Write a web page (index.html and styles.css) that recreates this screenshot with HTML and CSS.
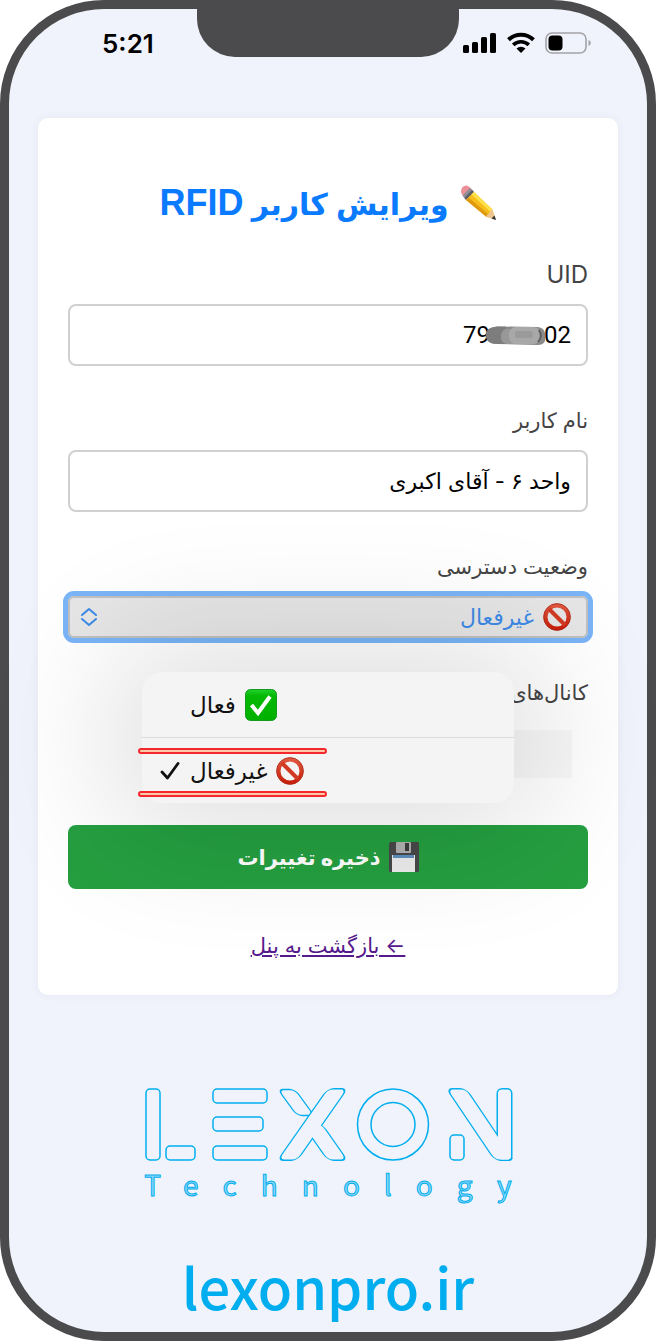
FILE: index.html
```html
<!DOCTYPE html>
<html lang="fa" dir="rtl">
<head>
    <meta charset="UTF-8">
    <meta name="viewport" content="width=device-width, initial-scale=1.0">
    <title>ویرایش کاربر RFID</title>
    <link rel="stylesheet" href="styles.css">
</head>
<body>
    <!-- shared icons -->
    <svg class="defs" width="0" height="0" aria-hidden="true">
        <defs>
            <linearGradient id="red" x1="0" y1="0" x2="0" y2="1">
                <stop offset="0" stop-color="#e0573f"/>
                <stop offset="1" stop-color="#c81f0b"/>
            </linearGradient>
            <linearGradient id="green" x1="0" y1="0" x2="0" y2="1">
                <stop offset="0" stop-color="#22d32f"/>
                <stop offset="0.2" stop-color="#06b906"/>
                <stop offset="1" stop-color="#00b000"/>
            </linearGradient>
            <symbol id="banned" viewBox="0 0 28 28">
                <circle cx="14" cy="14" r="11.5" fill="none" stroke="url(#red)" stroke-width="4"/>
                <path d="M6 6l16 16" stroke="#d23a22" stroke-width="4"/>
                <circle cx="14" cy="14" r="13.4" fill="none" stroke="#a82a18" stroke-width="0.8"/>
            </symbol>
        </defs>
    </svg>

    <div class="phone">
        <div class="notch"></div>
        <header class="status" dir="ltr">
            <span class="time">5:21</span>
            <div class="status-icons">
                <svg width="34" height="22" viewBox="0 0 34 22">
                    <rect x="0" y="13" width="6" height="8" rx="1.5"/>
                    <rect x="9" y="10" width="6" height="11" rx="1.5"/>
                    <rect x="18" y="5" width="6" height="16" rx="1.5"/>
                    <rect x="27" y="1" width="6" height="20" rx="1.5"/>
                </svg>
                <svg width="28" height="22" viewBox="0 0 28 22">
                    <path d="M1.5 7.800a18 18 0 0 1 25 0" fill="none" stroke="#000" stroke-width="4"/>
                    <path d="M6.200 12.900a11.300 11.300 0 0 1 15.600 0" fill="none" stroke="#000" stroke-width="3.600"/>
                    <path d="M14 21l-4.500-4.500a6.500 6.500 0 0 1 9 0z"/>
                </svg>
                <svg width="47" height="22" viewBox="0 0 47 22">
                    <rect x="1" y="1" width="40" height="20" rx="6" fill="none" stroke="#a3a3a8" stroke-width="1.600"/>
                    <rect x="3.500" y="3.500" width="14" height="15" rx="4"/>
                    <path d="M43.500 8c3 1 3 5 0 6z" fill="#a3a3a8"/>
                </svg>
            </div>
        </header>

        <main class="card">
            <h1 class="title">
                <svg width="36" height="36" viewBox="0 0 36 36">
                    <path d="M1 3q1-2.500 4-2.500 2 0 3.500 1.500l3.500 3.500-8 8-3-4q-2-3 0-6.500z" fill="#ec8f96"/>
                    <path d="M9 3l4 4-8 8-3.500-4.500z" fill="#8d8d94"/>
                    <path d="M11 5l2 2-8 8-1.500-2z" fill="#5d5d66"/>
                    <path d="M13 7l18.500 17.500-6 7.500L5 15z" fill="#f7bd18"/>
                    <path d="M13 7l18.500 17.500-2 2.500L10.500 9.500z" fill="#ffdf4a"/>
                    <path d="M7.500 12.500L5 15l20.500 17 2-2.600z" fill="#e09a10"/>
                    <path d="M31.500 24.500L35 35l-9.500-3q0-3 2.500-3 .5-3.500 3.500-4.500z" fill="#edc58c"/>
                    <path d="M33.500 30.500L35 35l-4.500-1.500z" fill="#333"/>
                </svg>
                <span>ویرایش کاربر <span class="latin">RFID</span></span>
            </h1>

            <form class="form">
                <div class="field">
                    <label for="uid" class="uid-label">UID</label>
                    <div class="control">
                        <input type="text" id="uid" class="uid" dir="ltr" value="79&#8199;&#8199;&#8199;&#8199;02">
                        <svg class="mask" width="60" height="20" viewBox="0 0 68 20" preserveAspectRatio="none">
                            <path d="M4 3q5-3 12-2.500l44 .5q7 1 8 6v8q-2 4-8 4l-46-1Q4 18 2 13-1 7 4 3z" fill="#8a8a8a"/>
                            <path d="M4 3q5-3 12-2.500h8q-5 9 2 17.500H14Q4 18 2 13-1 7 4 3z" fill="#777" fill-opacity="0.700"/>
                            <rect x="18" y="3" width="30" height="15" rx="7" fill="#989898"/>
                            <rect x="27" y="1" width="36" height="17" rx="8" fill="#a8a8a8"/>
                            <rect x="34" y="5" width="20" height="7" rx="2" fill="#9a9a9a"/>
                            <path d="M61 4q5 6-1 12" fill="none" stroke="#5c5c5c" stroke-width="2"/>
                        </svg>
                    </div>
                </div>

                <div class="field">
                    <label for="name">نام کاربر</label>
                    <input type="text" id="name" value="واحد ۶ - آقای اکبری">
                </div>

                <div class="field">
                    <label for="access">وضعیت دسترسی</label>
                    <div class="control">
                        <select id="access">
                            <option>فعال</option>
                            <option selected>غیرفعال</option>
                        </select>
                        <svg class="select-icon" width="28" height="28"><use href="#banned"/></svg>
                        <svg class="arrows" width="18" height="20" viewBox="0 0 18 20">
                            <path d="M2 8L9 2l7 6M2 12L9 18l7-6"/>
                        </svg>

                        <div class="menu" dir="ltr">
                            <button type="button" class="item">
                                <span class="tick"></span>
                                <span>فعال</span>
                                <svg width="32" height="32" viewBox="0 0 32 32">
                                    <rect x="0.500" y="0.500" width="31" height="31" rx="5" fill="url(#green)" stroke="#149a1c"/>
                                    <path d="M6.500 16l6.500 8L25 7.500" fill="none" stroke="#fff" stroke-width="4"/>
                                </svg>
                            </button>
                            <button type="button" class="item">
                                <span class="tick">
                                    <svg width="20" height="20" viewBox="0 0 20 20">
                                        <path d="M2 11l5.500 6L18 2.500" fill="none" stroke="#111" stroke-width="2.800" stroke-linecap="round" stroke-linejoin="round"/>
                                    </svg>
                                </span>
                                <span>غیرفعال</span>
                                <svg width="28" height="28"><use href="#banned"/></svg>
                            </button>
                            <span class="mark mark-top"></span>
                            <span class="mark mark-bottom"></span>
                        </div>
                    </div>
                </div>

                <div class="channels">
                    <span class="channels-label">کانال‌های</span>
                    <div class="channels-box"></div>
                </div>

                <button type="submit" class="save">
                    <svg width="30" height="30" viewBox="0 0 30 30">
                        <path d="M1 0h28l1 1v28l-1 1H1l-1-1V2z" fill="#48484a"/>
                        <rect x="7" y="0" width="15" height="11" rx="1" fill="#b0b0b2"/>
                        <rect x="16" y="1" width="4" height="8" fill="#3c3c3e"/>
                        <rect x="3" y="13" width="23" height="17" fill="#ececec"/>
                        <rect x="4" y="13" width="21" height="3" fill="#5f8fbd"/>
                    </svg>
                    <span>ذخیره تغییرات</span>
                </button>
            </form>

            <a class="back" href="#">← بازگشت به پنل</a>
        </main>

        <footer class="brand" dir="ltr">
            <svg class="logo" width="372" height="76" viewBox="0 0 372 76" role="img" aria-label="Lexon">
                <defs>
                    <g id="shapes">
                        <rect x="4" y="2" width="14" height="71" rx="4"/>
                        <rect x="24" y="59" width="29" height="14" rx="4"/>
                        <rect x="71" y="2" width="54" height="14" rx="4"/>
                        <rect x="71" y="30" width="50" height="14" rx="4"/>
                        <rect x="71" y="59" width="54" height="14" rx="4"/>
                        <rect x="308" y="48" width="14" height="25" rx="4"/>
                    </g>
                    <g id="cross">
                        <rect x="-9" y="-35" width="18" height="70" rx="5" transform="translate(170.500 37.500) skewX(-35)"/>
                        <rect x="-9" y="0" width="18" height="35" rx="5" transform="translate(170.500 37.500) skewX(35)"/>
                    </g>
                    <g id="slant">
                        <rect x="-9" y="-35" width="18" height="70" rx="5" transform="translate(338.500 37.500) skewX(34)"/>
                        <rect x="356" y="2.500" width="13" height="70" rx="4"/>
                    </g>
                </defs>
                <use href="#shapes" class="line"/>
                <rect class="line" x="-9" y="-35" width="17" height="26" rx="5" transform="translate(170.500 37.500) skewX(36)"/>
                <use href="#cross" class="outline"/>
                <use href="#slant" class="outline"/>
                <use href="#cross" class="inside"/>
                <use href="#slant" class="inside"/>
                <circle class="line" cx="251" cy="37.500" r="35.500"/>
                <circle class="line" cx="251" cy="37.500" r="22"/>
            </svg>
            <div class="tagline">Technology</div>
            <a class="site" href="#">lexonpro.ir</a>
        </footer>
    </div>
</body>
</html>
```
FILE: styles.css
```css
* {
    box-sizing: border-box;
}
body {
    margin: 0;
    background: #fff;
    font-family: Inter, "DejaVu Sans", sans-serif;
    color: #111;
}
.defs {
    position: absolute;
}
.phone {
    position: relative;
    display: flex;
    flex-direction: column;
    min-height: 100vh;
    border: 9px solid #4b4b4d;
    border-radius: 104px;
    background: #f0f3fb;
    padding: 0 29px;
}
.notch {
    position: absolute;
    top: -1px;
    left: 50%;
    width: 262px;
    height: 49px;
    transform: translateX(-50%);
    background: #4b4b4d;
    border-radius: 0 0 38px 38px;
}
.status {
    display: flex;
    justify-content: space-between;
    align-items: center;
    height: 32px;
    margin: 18px 26px 59px 64px;
}
.time {
    font-size: 26px;
    font-weight: 600;
    color: #000;
}
.status-icons {
    display: flex;
    gap: 10px;
}
.card {
    display: flex;
    flex-direction: column;
    padding: 63px 30px 34px;
    background: #fff;
    border-radius: 10px;
    box-shadow: 0 0 10px rgba(0, 0, 0, 0.05);
}
.title {
    display: flex;
    justify-content: center;
    align-items: center;
    gap: 12px;
    height: 44px;
    margin: 0 0 35px;
    font-family: "Liberation Sans", "DejaVu Sans", sans-serif;
    font-size: 30px;
    color: #0a7aff;
}
.latin {
    font-size: 36px;
}
.form {
    display: flex;
    flex-direction: column;
}
.field {
    display: flex;
    flex-direction: column;
    gap: 14px;
    margin-bottom: 40px;
}
label,
.channels-label {
    font-size: 21px;
    line-height: 30px;
    color: #444;
}
.uid-label {
    font-size: 24px;
}
.control {
    position: relative;
    display: flex;
}
input {
    width: 100%;
    height: 62px;
    padding: 0 15px;
    border: 2px solid #d0d0d0;
    border-radius: 8px;
    background: transparent;
    font-family: inherit;
    font-size: 22px;
    color: #000;
}
.uid {
    font-family: Roboto, sans-serif;
    font-size: 24px;
    text-align: right;
}
.mask {
    position: absolute;
    right: 43px;
    top: 22px;
}
select {
    width: 100%;
    height: 42px;
    padding: 0 52px;
    appearance: none;
    border: 2px solid #c0c0c0;
    border-radius: 6px;
    outline: 5px solid #7ab5f7;
    background: #e6e6e6;
    font-family: inherit;
    font-size: 22px;
    color: #3d8ae6;
}
.select-icon {
    position: absolute;
    right: 17px;
    top: 7px;
}
.arrows {
    position: absolute;
    left: 12px;
    top: 11px;
    fill: none;
    stroke: #3d8ae6;
    stroke-width: 2;
    stroke-linecap: round;
    stroke-linejoin: round;
}
.menu {
    position: absolute;
    top: 76px;
    left: 50%;
    z-index: 2;
    width: 372px;
    transform: translateX(-50%);
    background: #f4f4f4;
    border-radius: 20px;
    box-shadow: 0 0 130px 30px rgba(0, 0, 0, 0.13);
}
.item {
    display: flex;
    align-items: center;
    gap: 9px;
    width: 100%;
    height: 65px;
    padding: 0 18px;
    border: none;
    background: none;
    font-family: inherit;
    font-size: 23px;
    color: #111;
}
.item:first-child {
    height: 66px;
    border-bottom: 1px solid #dcdcdc;
}
.tick {
    display: flex;
    width: 21px;
}
.mark {
    position: absolute;
    left: -4px;
    width: 189px;
    height: 6px;
    border: 2px solid #f5282d;
    border-radius: 3px;
    background: #fbc9a8;
}
.mark-top {
    top: 76px;
}
.mark-bottom {
    top: 119px;
}
.channels {
    display: flex;
    flex-direction: column;
    gap: 22px;
    margin-bottom: 47px;
}
.channels-box {
    width: 120px;
    height: 48px;
    margin-right: 16px;
    background: #f8f8f8;
}
.save {
    display: flex;
    justify-content: center;
    align-items: center;
    gap: 8px;
    height: 64px;
    border: none;
    border-radius: 8px;
    background: #259f40;
    font-family: inherit;
    font-size: 21px;
    font-weight: bold;
    color: #fff;
}
.back {
    align-self: center;
    margin-top: 42px;
    font-size: 21px;
    line-height: 30px;
    color: #551a8b;
}
.brand {
    display: flex;
    flex-direction: column;
    align-items: center;
    margin-top: 92px;
}
.line {
    fill: none;
    stroke: #00aeef;
    stroke-width: 1.5;
}
.outline {
    fill: none;
    stroke: #00aeef;
    stroke-width: 3;
}
.inside {
    fill: #f0f3fb;
}
.tagline {
    margin-top: 4px;
    padding-left: 24px;
    font-family: "Noto Sans CJK SC", sans-serif;
    font-size: 28px;
    line-height: 34px;
    letter-spacing: 24px;
    color: #8fd8f7;
    -webkit-text-stroke: 1px #00aeef;
}
.site {
    margin-top: 50px;
    font-family: "Noto Sans CJK SC", sans-serif;
    font-size: 56px;
    font-weight: 500;
    line-height: 70px;
    color: #00aeef;
    text-decoration: none;
}
```
